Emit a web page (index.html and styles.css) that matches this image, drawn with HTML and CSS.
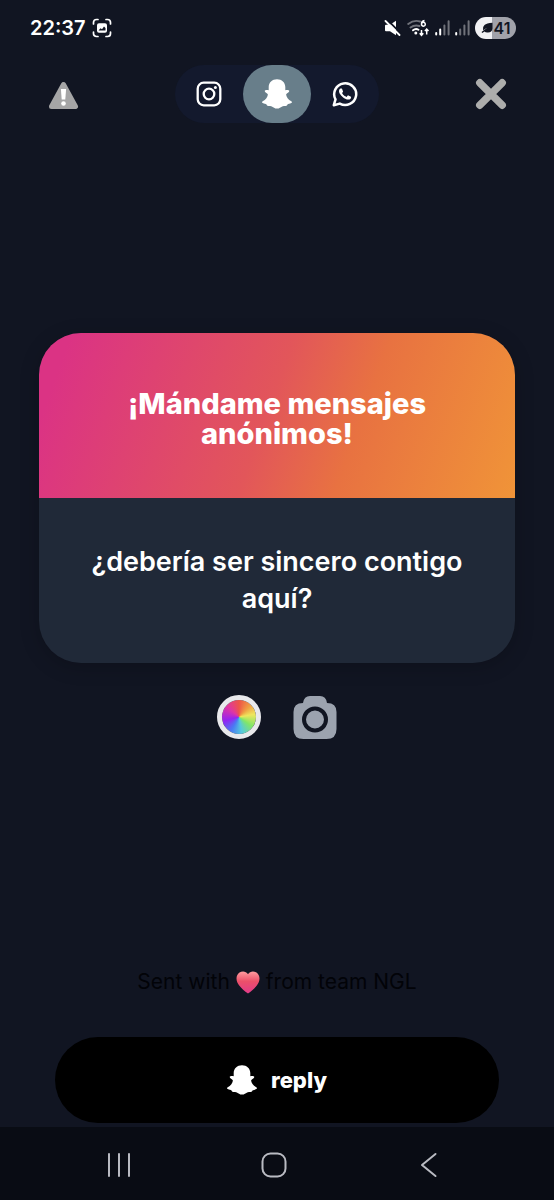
FILE: index.html
```html
<!DOCTYPE html>
<html lang="es">
<head>
<meta charset="utf-8">
<meta name="viewport" content="width=device-width, initial-scale=1">
<title>NGL</title>
<link rel="stylesheet" href="styles.css">
</head>
<body>
<svg class="defs" aria-hidden="true">
  <symbol id="ghost" viewBox="0 0 30 30">
    <path fill="currentColor" d="M15 .2C19.800 .2 23.300 3.400 23.300 8V11.200C24.600 10.700 27.100 10.700 27.300 12C27.400 13.500 24.700 14 24.200 15.300C23.900 17.200 26.200 20.500 29.300 22.300C30.300 22.900 30.100 23.700 29.200 24.100C28 24.800 26.200 24.900 25.500 25.500C25 26.200 25.100 26.800 23.600 26.900C22.400 27 21.300 26.900 20.100 27.400C18.500 28.100 17.500 29.600 15 29.600C12.500 29.600 11.500 28.100 9.900 27.400C8.700 26.900 7.600 27 6.400 26.900C4.900 26.800 5 26.200 4.500 25.500C3.800 24.900 2 24.800 .8 24.100C-.1 23.700 -.3 22.900 .7 22.300C3.800 20.500 6.100 17.200 5.800 15.300C5.300 14 2.600 13.500 2.700 12C2.900 10.700 5.400 10.700 6.700 11.200V8C6.700 3.400 10.200 .2 15 .2Z"/>
  </symbol>
  <symbol id="signal" viewBox="0 0 15 16">
    <g fill="none" stroke="currentColor" stroke-width="2" stroke-linecap="round">
      <path d="M1.200 13V14.600M5.200 9.500V14.600"/>
      <path d="M9.400 5.500V14.600M13.600 1.200V14.600" opacity=".4"/>
    </g>
  </symbol>
  <symbol id="signal-weak" viewBox="0 0 15 16">
    <g fill="none" stroke="currentColor" stroke-width="2" stroke-linecap="round">
      <path d="M1.200 13V14.600"/>
      <path d="M5.200 9.500V14.600M9.400 5.500V14.600M13.600 1.200V14.600" opacity=".4"/>
    </g>
  </symbol>
</svg>
<div class="screen">
  <header class="status">
    <div class="status-side">
      <time class="clock">22:37</time>
      <svg class="icon-capture" viewBox="0 0 20 20" aria-hidden="true">
        <path d="M1.500 6V4.500Q1.500 1.500 4.500 1.500H6M14 1.500H15.500Q18.500 1.500 18.500 4.500V6M18.500 14V15.500Q18.500 18.500 15.500 18.500H14M6 18.500H4.500Q1.500 18.500 1.500 15.500V14" fill="none" stroke="#fff" stroke-width="1.700" stroke-linecap="round"/>
        <rect x="5" y="5.200" width="10" height="9.600" rx="2" fill="#fff"/>
        <path d="M6.500 12.500L8.500 10.300L10 11.300L12 8.500L13.500 10V12.500Z" fill="#111522"/>
      </svg>
    </div>
    <div class="status-icons">
      <svg class="icon-mute" viewBox="0 0 18 16" aria-hidden="true">
        <path d="M2 4.800H6L12 .8V15.200L6 11.200H2Q1 11.200 1 10.200V5.800Q1 4.800 2 4.800Z" fill="#fff"/>
        <path d="M3.500 0L18 14.500" stroke="#111522" stroke-width="1.800"/>
        <path d="M1.500 1L15.500 15" stroke="#fff" stroke-width="1.800" stroke-linecap="round"/>
      </svg>
      <svg class="icon-wifi" viewBox="0 0 23 18" aria-hidden="true">
        <g fill="none" stroke="#fff" stroke-width="1.900" stroke-linecap="round">
          <path d="M1.200 5Q7 .5 13 2.500M3.500 8.500Q7.500 5.500 12.500 7" opacity=".4"/>
          <path d="M6 11.300Q8.700 9 11.500 10.800"/>
        </g>
        <circle cx="8.800" cy="14" r="1.500" fill="#fff"/>
        <path d="M17.500 1.500Q14.500 2 14.500 5A1.900 1.900 0 1 0 14.800 4.200M14.500 11V16M12.700 14.300L14.500 16.300L16.300 14.300M19.700 15.500V10.500M17.900 12L19.700 10L21.500 12" fill="none" stroke="#fff" stroke-width="1.500"/>
      </svg>
      <svg class="icon-signal" aria-hidden="true"><use href="#signal"/></svg>
      <svg class="icon-signal" aria-hidden="true"><use href="#signal-weak"/></svg>
      <div class="battery">
        <svg class="icon-leaf" viewBox="0 0 12 12" aria-hidden="true"><path d="M11.500 .8V6.500Q11 10.500 7 10.500Q4.500 10.700 3.500 9.600L1.300 11L.5 10L6.500 5.500L2 8.200Q1.200 5 3.500 3Q5.500 1.200 11.500 .8Z" fill="#111522"/></svg>
        <span>41</span>
      </div>
    </div>
  </header>

  <nav class="topbar" aria-label="Compartir">
    <button class="plain" aria-label="Denunciar">
      <svg class="icon-large" viewBox="0 0 32 32" aria-hidden="true">
        <path d="M16.500 6.500L28.500 28.500H4.500Z" fill="#a5a5a6" stroke="#a5a5a6" stroke-width="5" stroke-linejoin="round"/>
        <path d="M13.900 11H19.100L18.300 21.500H14.700Z" fill="#fff"/><circle cx="16.500" cy="25.500" r="2.300" fill="#fff"/>
      </svg>
    </button>
    <div class="switcher">
      <button class="segment" aria-label="Instagram">
        <svg class="icon-app" viewBox="0 0 26 26" fill="none" stroke="currentColor" stroke-width="2.300" aria-hidden="true"><rect x="1.700" y="1.700" width="22.600" height="22.600" rx="6"/><circle cx="13" cy="13" r="5.300"/><circle cx="19.400" cy="6.500" r="1.500" fill="currentColor" stroke="none"/></svg>
      </button>
      <button class="segment active" aria-label="Snapchat" aria-pressed="true"><svg class="icon-ghost" aria-hidden="true"><use href="#ghost"/></svg></button>
      <button class="segment" aria-label="WhatsApp">
        <svg class="icon-app" viewBox="0 0 26 26" aria-hidden="true">
          <path d="M1.800 24.200L3.500 18.300A11 10.800 0 1 1 7.800 22.600Z" fill="none" stroke="currentColor" stroke-width="2.500" stroke-linejoin="round"/>
          <path transform="translate(1 1)" fill="currentColor" d="M17.472 14.382c-.297-.149-1.758-.867-2.030-.967-.273-.099-.471-.148-.670.150-.197.297-.767.966-.940 1.164-.173.199-.347.223-.644.075-.297-.150-1.255-.463-2.390-1.475-.883-.788-1.480-1.761-1.653-2.059-.173-.297-.018-.458.130-.606.134-.133.298-.347.446-.520.149-.174.198-.298.298-.497.099-.198.050-.371-.025-.520-.075-.149-.669-1.612-.916-2.207-.242-.579-.487-.500-.669-.510-.173-.008-.371-.010-.570-.010-.198 0-.520.074-.792.372-.272.297-1.040 1.016-1.040 2.479 0 1.462 1.065 2.875 1.213 3.074.149.198 2.096 3.200 5.077 4.487.709.306 1.262.489 1.694.625.712.227 1.360.195 1.871.118.571-.085 1.758-.719 2.006-1.413.248-.694.248-1.289.173-1.413-.074-.124-.272-.198-.570-.347z"/>
        </svg>
      </button>
    </div>
    <button class="plain" aria-label="Cerrar">
      <svg class="icon-large" viewBox="0 0 32 32" aria-hidden="true"><path d="M4.800 4.800L27.200 27.200M27.200 4.800L4.800 27.200" stroke="#adadac" stroke-width="7.500" stroke-linecap="round"/></svg>
    </button>
  </nav>

  <main class="stage">
    <article class="card">
      <h1 class="prompt">¡Mándame mensajes anónimos!</h1>
      <p class="question">¿debería ser sincero contigo aquí?</p>
    </article>
    <div class="tools">
      <button class="color-wheel" aria-label="Color"></button>
      <button class="plain" aria-label="Cámara">
        <svg class="icon-camera" viewBox="0 0 44 44" aria-hidden="true">
          <path d="M10 8Q11 1 17 1H27Q33 1 34 8Q43.500 8 43.500 17V34Q43.500 44 33.500 44H10.500Q.5 44 .5 34V17Q.5 8 10 8Z" fill="#9ca3af"/>
          <circle cx="22" cy="24.500" r="11" fill="none" stroke="#111522" stroke-width="4"/>
        </svg>
      </button>
    </div>
  </main>

  <footer class="footer">
    <p class="sent"><span>Sent with</span>
      <svg class="icon-heart" viewBox="0 0 24 23" role="img" aria-label="amor"><defs><linearGradient id="love" x1="0" y1="0" x2="0" y2="1"><stop offset="0" stop-color="#ff9da0"/><stop offset=".45" stop-color="#ec5069"/><stop offset="1" stop-color="#e33b8a"/></linearGradient></defs><path d="M12 3.300C14-.2 18-.2 20.500 1.500C24.500 4.500 24.300 10 21 14.200C18.500 17.500 15.500 20 12 22.500C8.500 20 5.500 17.500 3 14.200C-.3 10-.5 4.500 3.500 1.500C6-.2 10-.2 12 3.300Z" fill="url(#love)"/></svg>
      <span>from team NGL</span></p>
    <button class="reply"><svg class="icon-ghost" aria-hidden="true"><use href="#ghost"/></svg>reply</button>
  </footer>

  <nav class="system" aria-label="Sistema">
    <button class="plain" aria-label="Recientes"><svg class="icon-system" viewBox="0 0 28 28" aria-hidden="true"><path d="M4 3V25M14 3V25M24 3V25"/></svg></button>
    <button class="plain" aria-label="Inicio"><svg class="icon-system" viewBox="0 0 28 28" aria-hidden="true"><rect x="2.500" y="2.500" width="23" height="23" rx="8"/></svg></button>
    <button class="plain" aria-label="Atrás"><svg class="icon-system" viewBox="0 0 28 28" aria-hidden="true"><path d="M20.500 3L7 14L20.500 25"/></svg></button>
  </nav>
</div>
</body>
</html>
```
FILE: styles.css
```css
* { box-sizing: border-box; }

body {
  margin: 0;
  background: #111522;
  color: #fff;
  font-family: Inter, "Liberation Sans", sans-serif;
}

h1, p { margin: 0; }
svg { display: block; flex: none; }

button {
  padding: 0;
  border: 0;
  color: inherit;
  font: inherit;
  background: none;
  cursor: pointer;
}

.defs { position: absolute; width: 0; height: 0; }

.screen {
  display: flex;
  flex-direction: column;
  min-height: 100vh;
}

.status {
  display: flex;
  align-items: center;
  justify-content: space-between;
  height: 56px;
  padding: 0 38px 0 30px;
}

.status-side { display: flex; align-items: center; gap: 6px; }
.clock { font-size: 20px; font-weight: 600; line-height: 24px; }
.status-icons { display: flex; align-items: center; gap: 5px; }
.icon-capture { width: 20px; height: 20px; }
.icon-mute { width: 18px; height: 16px; }
.icon-wifi { width: 23px; height: 18px; }
.icon-signal { width: 15px; height: 16px; }

.battery {
  display: flex;
  align-items: center;
  justify-content: center;
  gap: 1px;
  width: 41px;
  height: 22px;
  border-radius: 11px;
  background: linear-gradient(90deg, #f1f1f4 41%, #a1a2aa 41%);
  color: #111522;
  font-size: 16px;
  font-weight: 600;
}
.icon-leaf { width: 12px; height: 12px; }

.topbar {
  display: flex;
  align-items: center;
  justify-content: space-between;
  padding: 9px 47px 0;
}
.icon-large { width: 32px; height: 32px; }

.switcher {
  display: flex;
  border-radius: 29px;
  background: #13192d;
}

.segment {
  display: grid;
  place-items: center;
  width: 68px;
  height: 58px;
  border-radius: 29px;
}
.segment.active { background: #687e8a; }
.icon-app { width: 26px; height: 26px; }
.icon-ghost { width: 30px; height: 30px; }

.stage {
  display: flex;
  flex-direction: column;
  gap: 32px;
  padding: 210px 39px 40px;
}

.card {
  overflow: hidden;
  border-radius: 42px;
  background: #202938;
  box-shadow: 0 4px 20px rgba(0, 0, 0, 0.2);
  text-align: center;
}

.prompt {
  padding: 56px 80px 49px;
  background: linear-gradient(110deg, #db3384 6%, #e2565a 48%, #e87241 66%, #f09438);
  font-size: 29px;
  font-weight: 800;
  line-height: 30px;
}

.question {
  padding: 45px 40px 46px;
  font-size: 27px;
  font-weight: 600;
  line-height: 37px;
}

.tools { display: flex; justify-content: center; gap: 32px; }

.color-wheel {
  width: 44px;
  height: 44px;
  border: 5px solid #e9e9ec;
  border-radius: 50%;
  background: conic-gradient(#ee5448, #f0a044 45deg, #eee65d 80deg, #82e667 125deg, #55c8dd 170deg, #497bf3 210deg, #9424f2 255deg, #df35a5 310deg, #ee5448);
  background-clip: padding-box;
}
.icon-camera { width: 44px; height: 44px; }

.footer {
  display: flex;
  flex-direction: column;
  gap: 40px;
  margin-top: auto;
  padding: 0 55px 4px;
}

.sent {
  display: flex;
  align-items: center;
  justify-content: center;
  gap: 6px;
  color: #020308;
  font-size: 21px;
  line-height: 30px;
}
.icon-heart { width: 24px; height: 23px; }

.reply {
  display: flex;
  align-items: center;
  justify-content: center;
  gap: 14px;
  height: 86px;
  border-radius: 43px;
  background: #000;
  font-size: 22px;
  font-weight: 800;
}

.system {
  display: flex;
  align-items: center;
  justify-content: space-between;
  height: 73px;
  padding: 2px 111px 0 105px;
  background: #090c14;
}

.icon-system {
  width: 28px;
  height: 28px;
  fill: none;
  stroke: #b9bbc2;
  stroke-width: 2;
  stroke-linecap: round;
  stroke-linejoin: round;
}
```
